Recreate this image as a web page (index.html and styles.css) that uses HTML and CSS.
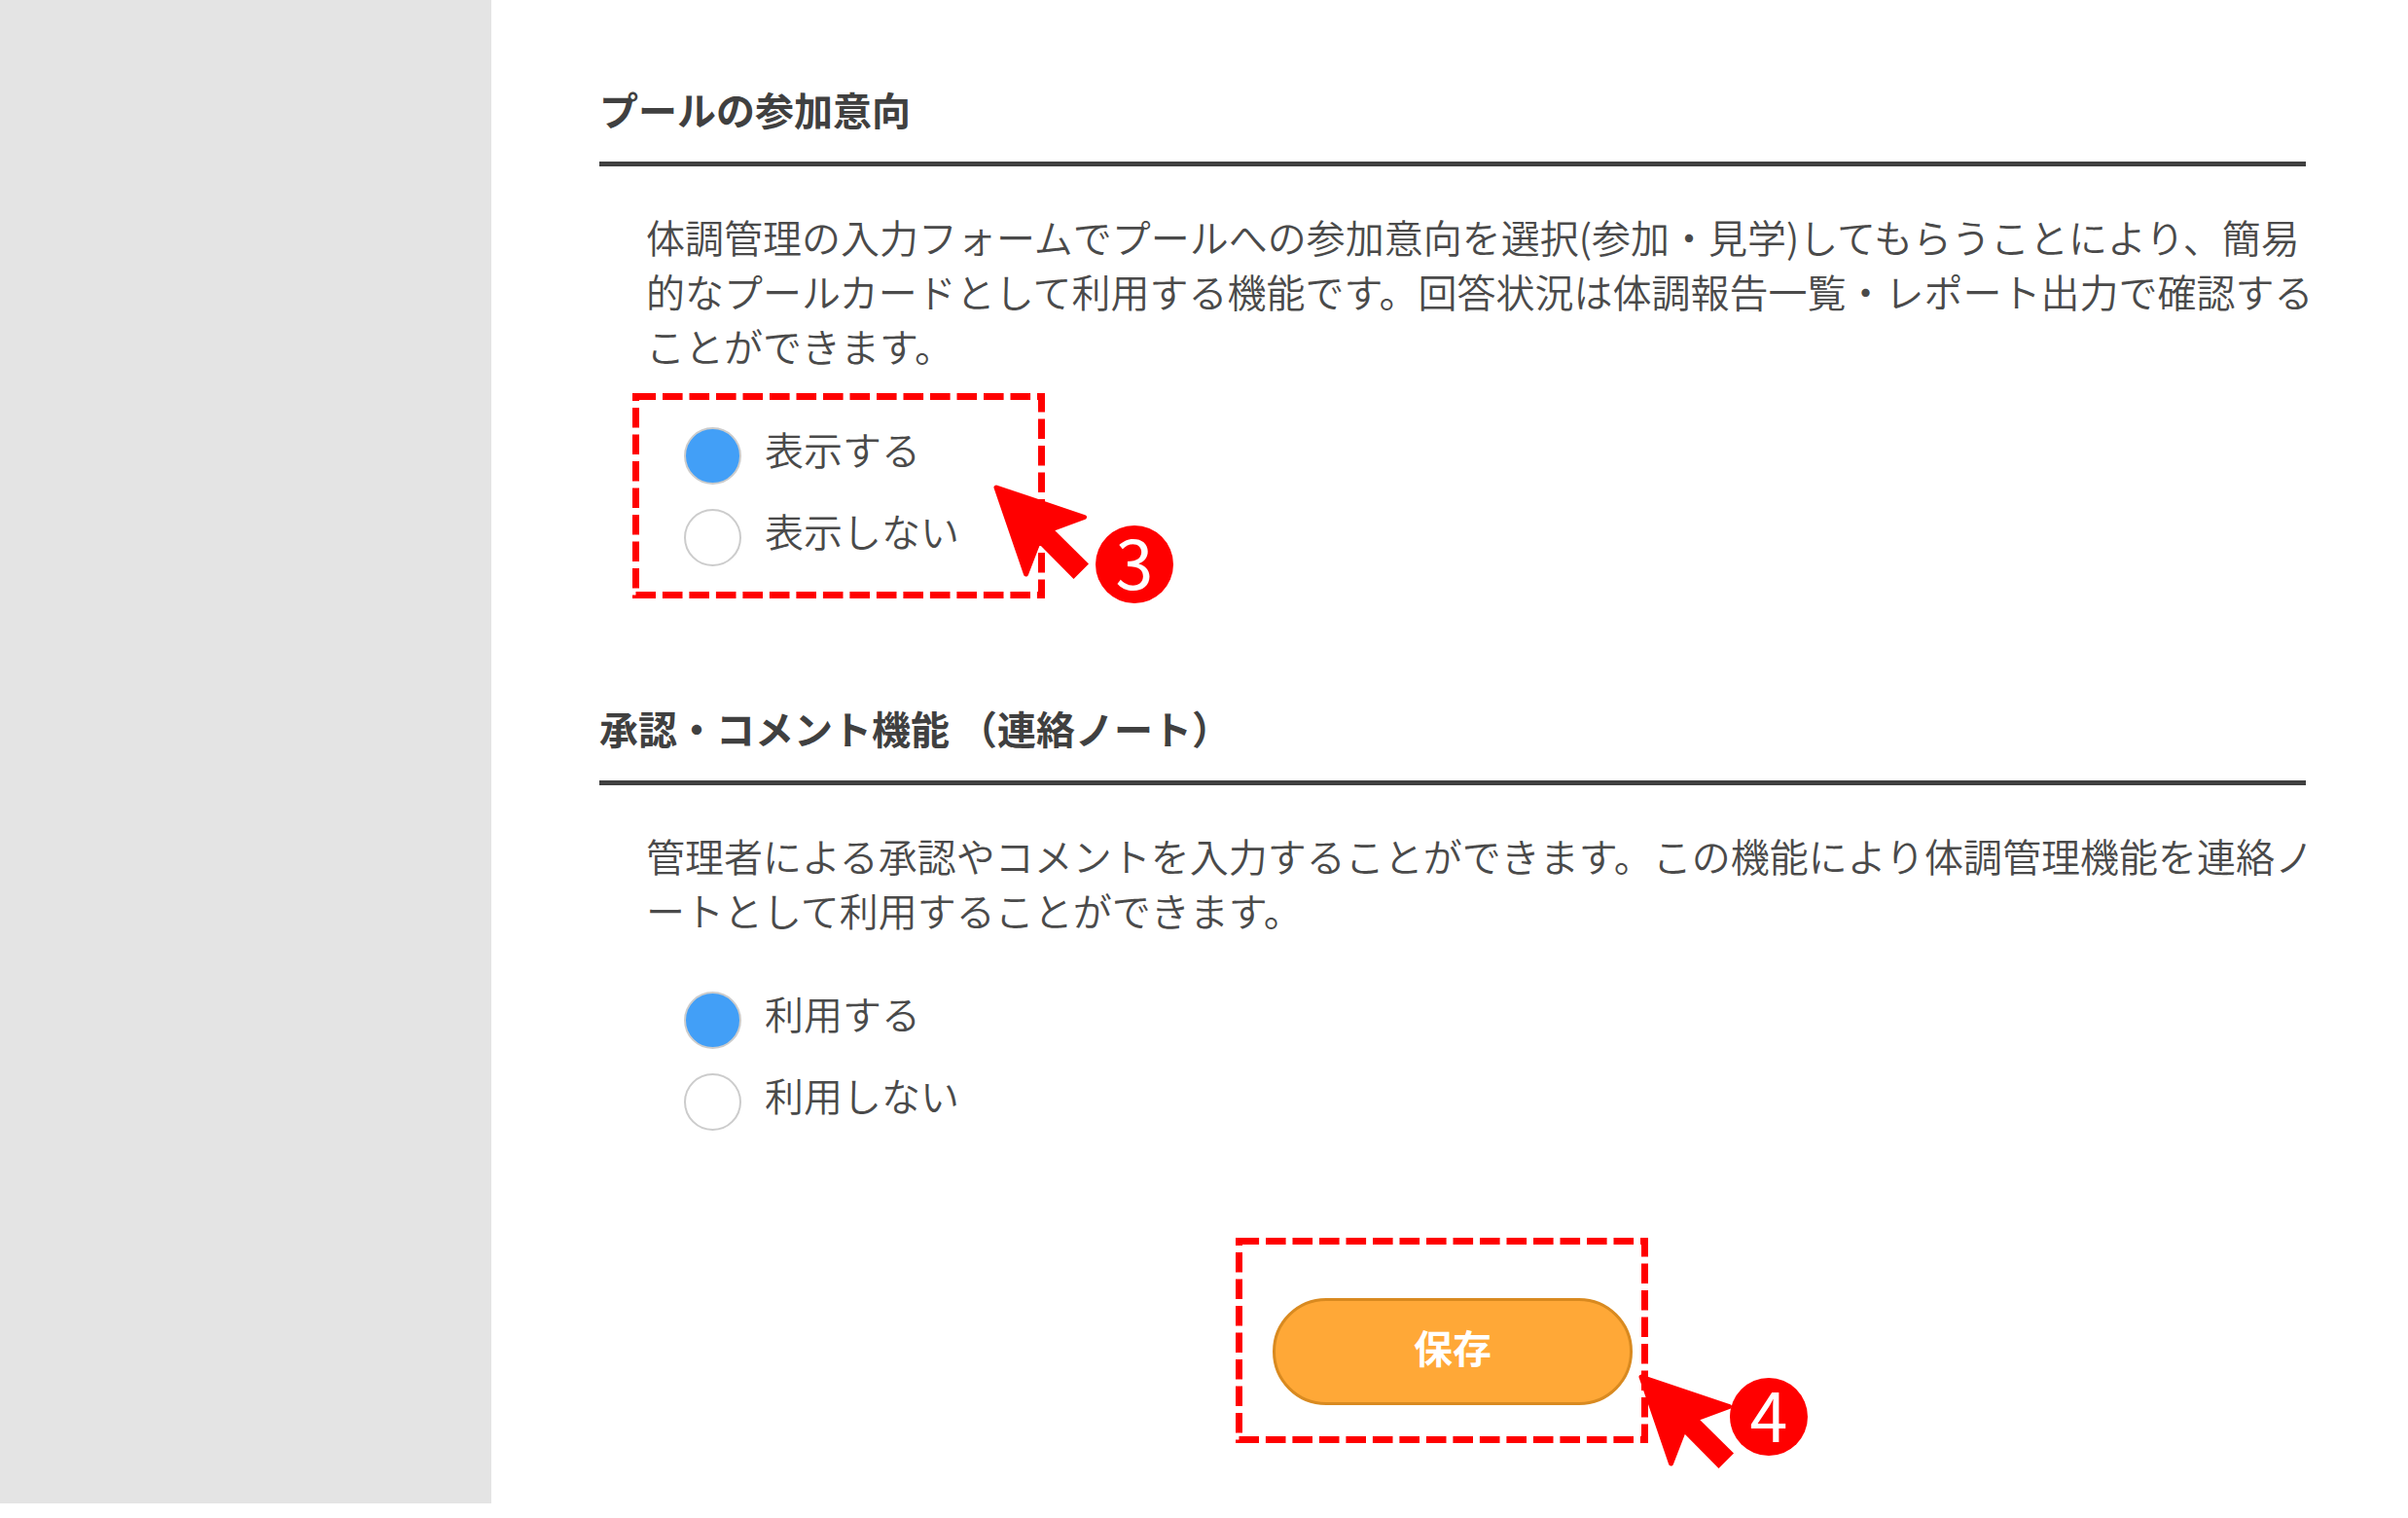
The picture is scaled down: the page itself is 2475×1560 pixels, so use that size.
FILE: index.html
```html
<!DOCTYPE html>
<html lang="ja">
<head>
<meta charset="UTF-8">
<meta name="viewport" content="width=device-width, initial-scale=1.0">
<title>体調管理 設定</title>
<link rel="stylesheet" href="styles.css">
</head>
<body>
	<div class="page">
		<aside class="sidebar"></aside>
		<main class="content">
			<form>
				<section class="setting">
					<h2>プールの参加意向</h2>
					<p id="pool-note">体調管理の入力フォームでプールへの参加意向を選択(参加・見学)してもらうことにより、簡易的なプールカードとして利用する機能です。回答状況は体調報告一覧・レポート出力で確認することができます。</p>
					<div class="options" role="radiogroup" aria-labelledby="pool-note">
						<label class="option"><input type="radio" name="pool" value="1" checked><span>表示する</span></label>
						<label class="option"><input type="radio" name="pool" value="0"><span>表示しない</span></label>
						<div class="guide guide-options">
							<svg class="frame" viewBox="0 0 424 211"><path d="M3.5 3.5H420.5V207.5H3.5Z"/></svg>
							<svg class="arrow" viewBox="0 0 100 100"><path d="M4 4L94.5 34.500L58 48L48 58L34.500 93Z"/><path class="tail" d="M55 39L99 82.500L83.500 98L40 54Z"/></svg>
							<span class="number">3</span>
						</div>
					</div>
				</section>

				<section class="setting">
					<h2>承認・コメント機能 （連絡ノート）</h2>
					<p id="note-note">管理者による承認やコメントを入力することができます。この機能により体調管理機能を連絡ノートとして利用することができます。</p>
					<div class="options" role="radiogroup" aria-labelledby="note-note">
						<label class="option"><input type="radio" name="note" value="1" checked><span>利用する</span></label>
						<label class="option"><input type="radio" name="note" value="0"><span>利用しない</span></label>
					</div>
				</section>

				<div class="submit">
					<button type="submit" class="save">保存</button>
					<div class="guide guide-save">
						<svg class="frame" viewBox="0 0 424 211"><path d="M3.5 3.5H420.5V207.5H3.5Z"/></svg>
						<svg class="arrow" viewBox="0 0 100 100"><path d="M4 4L94.5 34.500L58 48L48 58L34.500 93Z"/><path class="tail" d="M55 39L99 82.500L83.500 98L40 54Z"/></svg>
						<span class="number">4</span>
					</div>
				</div>
			</form>
		</main>
	</div>
</body>
</html>
```
FILE: styles.css
```css
*{
	box-sizing: border-box;
	margin: 0;
	padding: 0;
}

body{
	background: #fff;
	color: #4a4a4a;
	font-family: "Noto Sans CJK JP", sans-serif;
	font-size: 40px;
	line-height: 56px;
}

.page{
	display: flex;
	padding-bottom: 15px;
}

.sidebar{
	flex: 0 0 505px;
	background: #e4e4e4;
}

.content{
	flex: 1;
	min-width: 0;
	padding: 84px 105px 101px 111px;
}

.setting{
	margin-bottom: 126px;
}

.setting h2{
	padding-bottom: 26px;
	border-bottom: 5px solid #404040;
	color: #404040;
	font-size: 40px;
	font-weight: bold;
}

.setting p{
	margin: 44px -18px 43px 48px;
	font-weight: 350;
	line-break: loose;
}

/* radio buttons */
.options{
	position: relative;
	width: fit-content;
	margin-left: 87px;
}

.option{
	display: flex;
	align-items: center;
	gap: 24px;
	height: 84px;
	font-weight: 350;
	cursor: pointer;
}

.option span{
	padding-bottom: 14px;
}

.option input{
	appearance: none;
	width: 59px;
	height: 59px;
	border: 2px solid #ccc;
	border-radius: 50%;
	background: #fff;
	cursor: pointer;
}

.option input:checked{
	background: #429ff7;
}

/* save button */
.submit{
	position: relative;
	width: fit-content;
	margin: 160px auto 0;
}

.save{
	display: block;
	width: 370px;
	height: 110px;
	padding-bottom: 10px;
	border: 3px solid #d98a20;
	border-radius: 55px;
	background: #ffa837;
	color: #fff;
	font: bold 40px "Noto Sans CJK JP", sans-serif;
	cursor: pointer;
}

/* red guide marks */
.guide{
	position: absolute;
	width: 424px;
	height: 211px;
	pointer-events: none;
}

.guide-options{
	top: -22px;
	left: -53px;
}

.guide-save{
	top: -62px;
	left: -38px;
}

.frame{
	display: block;
	width: 424px;
	height: 211px;
	fill: none;
	stroke: #f00;
	stroke-width: 7px;
	stroke-dasharray: 20.6 6.9;
}

.arrow{
	position: absolute;
	top: 93px;
	left: 370px;
	width: 100px;
	height: 100px;
	fill: #f00;
	stroke: #f00;
	stroke-width: 5px;
	stroke-linejoin: round;
}

.arrow .tail{
	stroke: none;
}

.number{
	position: absolute;
	top: 136px;
	left: 476px;
	width: 80px;
	height: 80px;
	border-radius: 50%;
	background: #f00;
	color: #fff;
	font-size: 70px;
	line-height: 72px;
	text-align: center;
}

.guide-save .arrow{
	top: 139px;
	left: 413px;
}

.guide-save .number{
	top: 144px;
	left: 508px;
}
```
